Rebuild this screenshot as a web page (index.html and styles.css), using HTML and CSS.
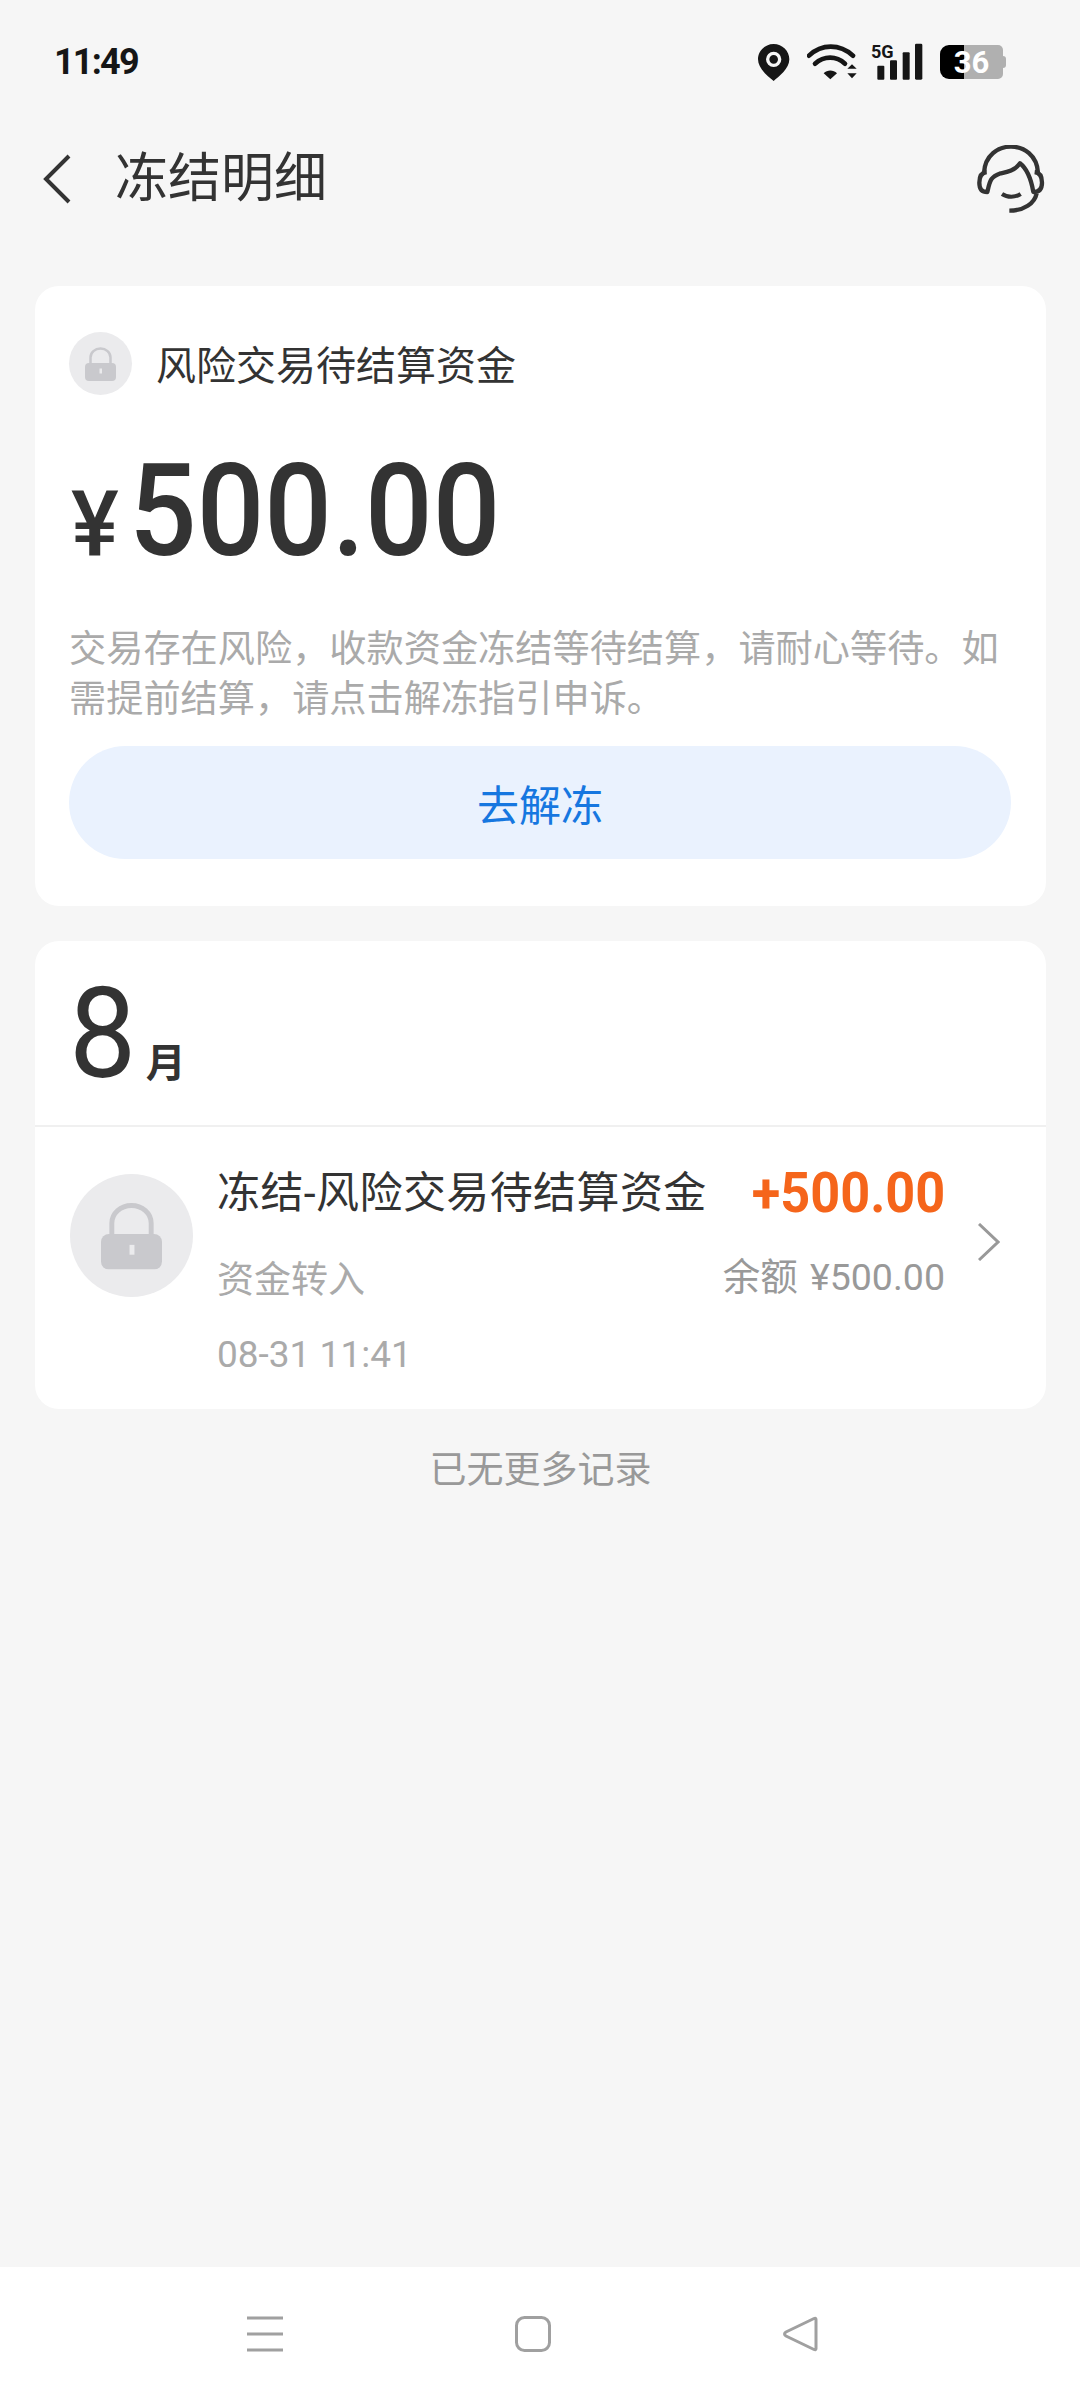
FILE: index.html
```html
<!DOCTYPE html>
<html lang="zh-CN">
<head>
  <meta charset="UTF-8" />
  <meta name="viewport" content="width=device-width, initial-scale=1.0"/>
  <title>冻结明细</title>
  <link rel="stylesheet" href="styles.css">
</head>
<body>
  <div class="status-bar">
    <span class="time">11:49</span>
    <div class="status-icons">
      <svg class="icon-pin" viewBox="118 72 96 111">
        <path d="M165 72c-26 0-47 21-47 46 0 28 31 52 47 65 16-13 47-37 47-65 0-25-21-46-47-46z" fill="#161616"/>
        <circle cx="165" cy="118" r="18" fill="none" stroke="#f6f6f6" stroke-width="10"/>
      </svg>
      <svg class="icon-wifi" viewBox="264 72 150 108">
        <path d="M270 107c38-36 92-36 132 0" fill="none" stroke="#161616" stroke-width="14" stroke-linecap="round"/>
        <path d="M288 131c27-24 64-24 90 0" fill="none" stroke="#161616" stroke-width="14" stroke-linecap="round"/>
        <path d="M314 160c11-11 29-11 40 0l-20 18z" fill="#161616"/>
        <path d="M385 146l14-13 14 13zM385 160h28l-14 15z" fill="#161616"/>
      </svg>
      <svg class="icon-signal" viewBox="456 70 156 114">
        <text class="signal-label" x="456" y="115" textLength="68" lengthAdjust="spacingAndGlyphs">5G</text>
        <rect x="475" y="138" width="21" height="42" rx="3" fill="#161616"/>
        <rect x="513" y="122" width="21" height="58" rx="3" fill="#161616"/>
        <rect x="551" y="98" width="21" height="82" rx="3" fill="#161616"/>
        <rect x="588" y="72" width="22" height="108" rx="4" fill="#161616"/>
      </svg>
      <div class="battery"><span class="battery-level">36</span><i class="battery-nub"></i></div>
    </div>
  </div>

  <div class="nav-bar">
    <svg class="icon-back" viewBox="0 0 28 50">
      <path d="M26 2L3 25l23 23" fill="none" stroke="#333" stroke-width="4"/>
    </svg>
    <h1 class="nav-title">冻结明细</h1>
    <svg class="icon-service" viewBox="771 375 204 204">
      <path d="M792 458c6-104 156-104 162 0" fill="none" stroke="#333" stroke-width="13"/>
      <path d="M800 456c-16 2-22 12-22 32 0 18 6 28 24 28 8-34 8-44 40-56 20-4 42-8 58-30 18 14 32 40 40 86 18 0 26-10 26-28 0-20-6-30-22-32" fill="none" stroke="#333" stroke-width="13" stroke-linejoin="round"/>
      <path d="M846 522c16 11 40 11 56 0" fill="none" stroke="#333" stroke-width="12"/>
      <path d="M950 520c-6 30-38 52-82 52" fill="none" stroke="#333" stroke-width="13"/>
    </svg>
  </div>

  <main class="content">
    <section class="card summary">
      <div class="summary-head">
        <div class="lock lock-small">
          <svg viewBox="0 0 62 68"><use href="#lock-shape"/></svg>
        </div>
        <span class="summary-name">风险交易待结算资金</span>
      </div>
      <div class="amount"><span class="amount-sign">¥</span><span class="amount-value">500.00</span></div>
      <p class="summary-desc">交易存在风险，收款资金冻结等待结算，请耐心等待。如需提前结算，请点击解冻指引申诉。</p>
      <button class="unfreeze-btn">去解冻</button>
    </section>

    <section class="card records">
      <div class="month"><span class="month-num">8</span><span class="month-unit">月</span></div>
      <div class="record">
        <div class="lock lock-large">
          <svg viewBox="0 0 62 68"><use href="#lock-shape"/></svg>
        </div>
        <div class="record-info">
          <div class="record-title">冻结-风险交易待结算资金</div>
          <div class="record-type">资金转入</div>
          <div class="record-date">08-31 11:41</div>
        </div>
        <div class="record-money">
          <div class="record-amount">+500.00</div>
          <div class="record-balance">余额 ¥500.00</div>
        </div>
        <svg class="icon-more" viewBox="0 0 22 38">
          <path d="M1 1l19 18L1 37" fill="none" stroke="#999" stroke-width="3"/>
        </svg>
      </div>
    </section>

    <p class="no-more">已无更多记录</p>
  </main>

  <div class="system-nav">
    <svg class="icon-menu" viewBox="0 0 36 36">
      <path d="M0 2h36M0 18h36M0 34h36" stroke="#a0a0a0" stroke-width="3"/>
    </svg>
    <svg class="icon-home" viewBox="0 0 36 36">
      <rect x="1.5" y="1.5" width="33" height="33" rx="8" fill="none" stroke="#a0a0a0" stroke-width="3"/>
    </svg>
    <svg class="icon-recent" viewBox="0 0 36 36">
      <path d="M33 3.500v29q0 2-2 1L3 20q-3-2 0-4L31 2.500q2-1 2 1z" fill="none" stroke="#a0a0a0" stroke-width="3"/>
    </svg>
  </div>

  <svg class="defs" width="0" height="0">
    <symbol id="lock-shape" viewBox="0 0 62 68">
      <path d="M11 36V21a20 18 0 0 1 40 0v15" fill="none" stroke="#c9c9cd" stroke-width="5"/>
      <rect x="0" y="32" width="62" height="36" rx="8" fill="#c9c9cd"/>
      <rect x="29" y="43" width="5" height="10" fill="#ebebed"/>
    </symbol>
  </svg>
</body>
</html>
```

FILE: styles.css
```css
* {
  box-sizing: border-box;
}

body {
  margin: 0;
  width: 1080px;
  height: 2400px;
  display: flex;
  flex-direction: column;
  background-color: #f6f6f6;
  color: #333;
  font-family: Roboto, "Noto Sans CJK SC", sans-serif;
}

svg {
  display: block;
  flex: none;
}

.defs {
  position: absolute;
}

/* status bar */
.status-bar {
  height: 124px;
  padding: 0 74px 0 54px;
  display: flex;
  align-items: center;
  justify-content: space-between;
}

.time {
  font-size: 36px;
  font-weight: 700;
  letter-spacing: -1.8px;
  color: #161616;
}

.status-icons {
  display: flex;
  align-items: center;
}

.icon-pin {
  width: 32px;
  height: 37px;
  margin-right: 17px;
}

.icon-wifi {
  width: 50px;
  height: 36px;
  margin-right: 14px;
}

.icon-signal {
  width: 52px;
  height: 38px;
  margin-right: 17px;
  overflow: visible;
}

.signal-label {
  font-family: Roboto, sans-serif;
  font-size: 54px;
  font-weight: 700;
  fill: #161616;
}

.battery {
  display: flex;
  align-items: center;
}

.battery-level {
  width: 63px;
  height: 34px;
  border-radius: 9px 5px 5px 9px;
  background: linear-gradient(90deg, #000 24px, #b0b0b0 24px);
  color: #fff;
  font-size: 31px;
  font-weight: 700;
  line-height: 35px;
  text-align: center;
}

.battery-nub {
  width: 3px;
  height: 12px;
  border-radius: 0 3px 3px 0;
  background-color: #b0b0b0;
}

/* title bar */
.nav-bar {
  height: 110px;
  padding: 0 35px 0 43px;
  display: flex;
  align-items: center;
}

.icon-back {
  width: 28px;
  height: 50px;
}

.nav-title {
  flex: 1;
  margin: 0 0 0 44px;
  font-size: 53px;
  font-weight: 400;
  line-height: 70px;
}

.icon-service {
  width: 68px;
  height: 68px;
}

/* cards */
.content {
  flex: 1;
  padding: 52px 34px 0 35px;
}

.card {
  background-color: #fff;
  border-radius: 24px;
}

.summary {
  padding: 46px 35px 47px 34px;
}

.summary-head {
  display: flex;
  align-items: flex-start;
  gap: 24px;
}

.summary-name {
  font-size: 40px;
  line-height: 69px;
}

.lock {
  flex: none;
  display: flex;
  align-items: center;
  justify-content: center;
  border-radius: 50%;
  background-color: #ebebed;
}

.lock-small {
  width: 63px;
  height: 63px;
}

.lock-small svg {
  width: 31px;
  height: 34px;
}

.lock-large {
  width: 123px;
  height: 123px;
  margin-top: 11px;
}

.lock-large svg {
  width: 61px;
  height: 68px;
}

.amount {
  margin: 46px 0 35px;
  display: flex;
  align-items: baseline;
  line-height: 128px;
  font-weight: 500;
}

.amount-sign {
  width: 60px;
  padding-left: 2px;
  font-size: 90px;
}

.amount-value {
  font-size: 128px;
  transform: scaleX(0.93);
  transform-origin: left;
}

.summary-desc {
  margin: 0;
  font-size: 37.2px;
  line-height: 50px;
  color: #aaa;
}

.unfreeze-btn {
  display: block;
  width: 100%;
  height: 113px;
  margin-top: 22px;
  border: none;
  border-radius: 57px;
  background-color: #eaf2fe;
  color: #1677e0;
  font-family: inherit;
  font-size: 42px;
}

.records {
  margin-top: 35px;
}

.month {
  height: 186px;
  padding: 30px 0 0 34px;
  display: flex;
  align-items: baseline;
  gap: 6px;
  border-bottom: 2px solid #f0f0f0;
}

.month-num {
  font-size: 126px;
  line-height: 126px;
  transform: scaleX(0.95);
  transform-origin: left;
}

.month-unit {
  font-size: 40px;
  font-weight: 700;
}

.record {
  padding: 36px 46px 24px 35px;
  display: flex;
  align-items: flex-start;
}

.record-info {
  flex: 1;
  margin-left: 24px;
}

.record-title {
  font-size: 43px;
  line-height: 60px;
  letter-spacing: 0.4px;
}

.record-type {
  margin-top: 28px;
  font-size: 37px;
  line-height: 60px;
  color: #aaa;
}

.record-date {
  margin-top: 14px;
  font-size: 37px;
  line-height: 60px;
  color: #aaa;
}

.record-money {
  text-align: right;
}

.record-amount {
  font-size: 55px;
  font-weight: 700;
  line-height: 60px;
  color: #f5651b;
  transform: scaleX(0.95);
  transform-origin: right;
}

.record-balance {
  margin-top: 24px;
  font-size: 37.5px;
  line-height: 60px;
  word-spacing: 3px;
  color: #999;
}

.icon-more {
  width: 22px;
  height: 38px;
  margin: 60px 0 0 33px;
}

.no-more {
  margin: 37px 0 0;
  font-size: 37px;
  line-height: 50px;
  text-align: center;
  color: #999;
}

/* system navigation */
.system-nav {
  height: 133px;
  padding-left: 247px;
  display: flex;
  align-items: center;
  gap: 232px;
  background-color: #fff;
}

.system-nav svg {
  width: 36px;
  height: 36px;
}
```
